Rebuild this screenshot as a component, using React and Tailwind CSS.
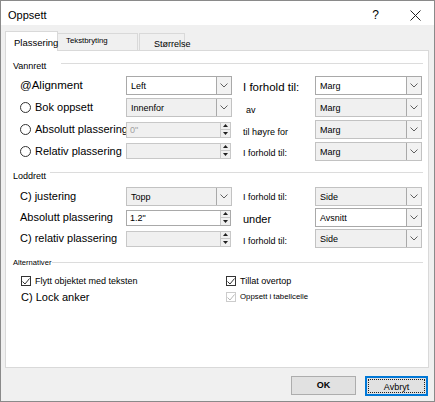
import React from "react";
import clsx from "clsx";

function Chevron() {
  return (
    <svg width="8" height="5" viewBox="0 0 8 5" className="block">
      <path d="M0.5 0.5 L4 4 L7.5 0.5" fill="none" stroke="#606060" strokeWidth="1" />
    </svg>
  );
}

function Select({ value, enabled, wide }) {
  return (
    <div
      className={clsx(
        "flex h-[19px] items-stretch border",
        wide ? "w-[107px]" : "w-[106px]",
        enabled ? "bg-white border-[#a9a9a9]" : "bg-[#f0f0f0] border-[#c2c2c2]"
      )}
    >
      <span className="flex-1 truncate pl-[4px] text-[9px] leading-[18px] text-black">{value}</span>
      <span className="flex w-[15px] items-center justify-center border-l border-[#a9a9a9] bg-[#f2f2f2]">
        <Chevron />
      </span>
    </div>
  );
}

function Spin({ value, enabled }) {
  return (
    <div
      className={clsx(
        "relative flex h-[16px] w-[105px] items-stretch border",
        enabled ? "bg-white border-[#a9a9a9]" : "bg-[#f0f0f0] border-[#c8c8c8]"
      )}
    >
      <span
        className={clsx(
          "flex-1 pl-[3px] text-[9px] leading-[14px]",
          enabled ? "text-black" : "text-[#a0a0a0]"
        )}
      >
        {value}
      </span>
      <span className="flex w-[10px] flex-col border-l border-[#c8c8c8] bg-[#f0f0f0]">
        <span className="flex flex-1 items-center justify-center border-b border-[#c8c8c8]">
          <svg width="5" height="3" viewBox="0 0 5 3"><path d="M0 3 L2.5 0 L5 3 Z" fill="#202020" /></svg>
        </span>
        <span className="flex flex-1 items-center justify-center">
          <svg width="5" height="3" viewBox="0 0 5 3"><path d="M0 0 L2.5 3 L5 0 Z" fill="#202020" /></svg>
        </span>
      </span>
    </div>
  );
}

function Radio({ label }) {
  return (
    <div className="flex items-center gap-[4px] whitespace-nowrap">
      <span className="h-[11px] w-[11px] shrink-0 rounded-full border border-[#333] bg-white" />
      <span className="relative z-0 text-[11px] leading-[13px]">{label}</span>
    </div>
  );
}

function Check({ label, disabled, small }) {
  return (
    <div className="flex items-center gap-[4px] whitespace-nowrap">
      <span
        className={clsx(
          "flex h-[10px] w-[10px] items-center justify-center border bg-white",
          disabled ? "border-[#cccccc]" : "border-[#333]"
        )}
      >
        <svg width="8" height="7" viewBox="0 0 8 7">
          <path
            d="M0.5 3.5 L3 6 L7.5 0.5"
            fill="none"
            stroke={disabled ? "#b8b8b8" : "#333"}
            strokeWidth="1"
          />
        </svg>
      </span>
      <span className={clsx(small ? "text-[7.8px]" : "text-[9px]", "leading-[12px]")}>{label}</span>
    </div>
  );
}

function Header({ text, gap, lineClass }) {
  return (
    <div className="flex h-[11px] items-start pl-[7px] pr-[5px]">
      <span className={clsx("whitespace-nowrap leading-[11px]", text === "Alternativer" ? "text-[7.6px]" : "text-[9px]")}>
        {text}
      </span>
      <span className={clsx("h-px flex-1 bg-[#dcdcdc]", gap, lineClass)} />
    </div>
  );
}

export default function App() {
  return (
    <div className="flex h-[402px] w-[435px] flex-col border border-[#8a8a8a] bg-[#f0f0f0] font-['Liberation_Sans',Arial,sans-serif] text-black">
      {/* title bar */}
      <div className="flex h-[24px] shrink-0 items-center bg-white pl-[7px] pt-[4px]">
        <span className="flex-1 text-[11px]">Oppsett</span>
        <span className="mr-[31px] text-[12px]">?</span>
        <svg width="11" height="11" viewBox="0 0 11 11" className="mr-[13px]">
          <path d="M0.5 0.5 L10.5 10.5 M10.5 0.5 L0.5 10.5" stroke="#222" strokeWidth="1" />
        </svg>
      </div>

      <div className="flex flex-1 flex-col px-[4px] pr-[5px] pt-[7px]">
        {/* tabs */}
        <div className="flex h-[18px] items-end">
          <div className="relative z-10 -mb-px h-[20px] w-[53px] border border-b-0 border-[#d9d9d9] bg-white pl-[8px] pt-[5px] text-[9.5px] leading-[12px]">
            Plassering
          </div>
          <div className="h-[17px] w-[80px] border border-b-0 border-l-0 border-[#d9d9d9] bg-[#f0f0f0] pl-[8px] pt-[1px] text-[7.8px] leading-[12px]">
            Tekstbryting
          </div>
          <div className="ml-px h-[17px] w-[46px] whitespace-nowrap border border-b-0 border-[#d9d9d9] bg-[#f0f0f0] pl-[14px] pt-[4px] text-[9px] leading-[12px]">
            Størrelse
          </div>
        </div>

        {/* panel */}
        <div className="flex h-[318px] flex-col border border-[#d9d9d9] bg-white pt-[10px]">
          <Header text="Vannrett" gap="ml-[15px]" lineClass="mt-[2px]" />
          <div className="mt-[4px] grid grid-cols-[106px_106px_83px_107px] grid-rows-[19px_19px_19px_19px] items-center gap-y-[3px] pl-[14px]">
            <span className="text-[11.5px] leading-[13px]">@Alignment</span>
            <Select value="Left" enabled />
            <span className="pl-[11px] pt-[3px] text-[11.5px] leading-[13px]">I forhold til:</span>
            <Select value="Marg" enabled wide />

            <Radio label="Bok oppsett" />
            <Select value="Innenfor" />
            <span className="pl-[14px] pt-[4px] text-[9px] leading-[12px]">av</span>
            <Select value="Marg" wide />

            <Radio label="Absolutt plassering" />
            <div className="relative z-[-0]"><Spin value={'0"'} /></div>
            <span className="pl-[11px] pt-[4px] text-[9px] leading-[12px]">til høyre for</span>
            <Select value="Marg" wide />

            <Radio label="Relativ plassering" />
            <div className="-mt-[2px]"><Spin value="" /></div>
            <span className="pl-[11px] pt-[2px] text-[9px] leading-[12px]">I forhold til:</span>
            <Select value="Marg" wide />
          </div>

          <div className="mt-[10px]">
            <Header text="Loddrett" gap="ml-[4px]" lineClass="mt-[1px]" />
          </div>
          <div className="mt-[5px] grid grid-cols-[106px_106px_83px_107px] grid-rows-[19px_19px_19px] items-center gap-y-[2px] pl-[14px]">
            <span className="whitespace-nowrap text-[11px] leading-[13px]">C) justering</span>
            <Select value="Topp" />
            <span className="pl-[11px] text-[9px] leading-[12px]">I forhold til:</span>
            <Select value="Side" wide />

            <span className="whitespace-nowrap text-[11px] leading-[13px]">Absolutt plassering</span>
            <Spin value={'1.2"'} enabled />
            <span className="pl-[11px] pt-[3px] text-[11px] leading-[13px]">under</span>
            <Select value="Avsnitt" enabled wide />

            <span className="whitespace-nowrap text-[11px] leading-[13px]">C) relativ plassering</span>
            <Spin value="" />
            <span className="pl-[11px] pt-[4px] text-[9px] leading-[12px]">I forhold til:</span>
            <Select value="Side" wide />
          </div>

          <div className="mt-[9px]">
            <Header text="Alternativer" gap="ml-[1px]" lineClass="mt-[5px]" />
          </div>
          <div className="mt-[6px] grid grid-cols-[205px_1fr] grid-rows-[14px_14px] items-center gap-y-[2px] pl-[15px]">
            <Check label="Flytt objektet med teksten" />
            <Check label="Tillat overtop" />
            <span className="text-[11px] leading-[13px]">C) Lock anker</span>
            <Check label="Oppsett i tabellcelle" disabled small />
          </div>
        </div>

        {/* buttons */}
        <div className="mt-[8px] flex h-[20px] justify-end gap-[9px] pr-px">
          <button className="h-[19px] w-[65px] border border-[#adadad] bg-[#e1e1e1] text-[9px] font-bold leading-[17px]">
            OK
          </button>
          <button className="h-[20px] w-[63px] border-2 border-[#0078d7] bg-[#e1e1e1] p-px">
            <span className="block h-full w-full border border-dotted border-[#222] text-[9px] leading-[14px]">
              Avbryt
            </span>
          </button>
        </div>
      </div>
    </div>
  );
}
